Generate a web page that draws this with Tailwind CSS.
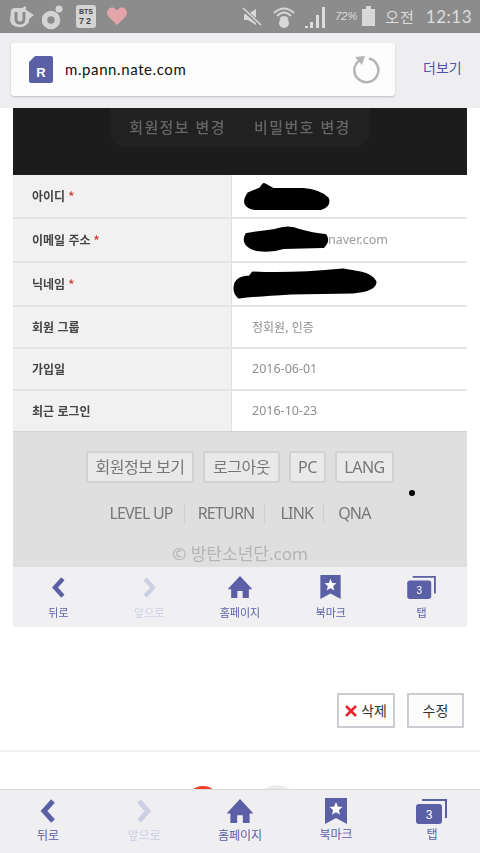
<!DOCTYPE html>
<html lang="ko">
<head>
<meta charset="UTF-8">
<meta name="viewport" content="width=device-width, initial-scale=1.0">
<title>m.pann.nate.com</title>
<script src="https://cdn.jsdelivr.net/npm/@tailwindcss/browser@4"></script>
</head>
<body class="w-[480px] h-[853px] overflow-hidden bg-white font-['Noto_Sans_CJK_KR','Noto_Sans',sans-serif]">

<!-- Status bar -->
<div class="h-[33px] bg-[#8c8c8c] flex items-center pl-[8px] pr-[8px] text-[#dcdcdc]">
  <svg class="w-[27px] h-[24px]" viewBox="0 0 27 24"><path d="M3 6 Q3 3 7 3 H14 L18 1 V5 L26 10 L21 14 V17 Q17 23 11 22 Q3 22 2 15Z" fill="#d4d4d4"/><path d="M8 7 V14 Q8 18 12 18 Q16 18 16 14 V7" fill="none" stroke="#8c8c8c" stroke-width="3"/></svg>
  <svg class="w-[21px] h-[26px] ml-[7px]" viewBox="0 0 21 26"><circle cx="9" cy="16" r="6.500" fill="none" stroke="#d4d4d4" stroke-width="5.500"/><circle cx="17" cy="5" r="3.500" fill="#d4d4d4"/></svg>
  <div class="w-[20px] h-[23px] ml-[13px] bg-[#d4d4d4] rounded-[3px] flex flex-col items-center justify-center text-[#444] font-['Liberation_Sans'] font-bold leading-none">
    <span class="text-[7px]">BTS</span>
    <span class="text-[9px] mt-[2px] tracking-[2px]">72</span>
  </div>
  <svg class="w-[22px] h-[19px] ml-[10px]" viewBox="0 0 22 20"><path d="M11 19 L2 10 C-2 5 3 -1 8 1 Q10 2 11 4 Q12 2 14 1 C19 -1 24 5 20 10Z" fill="#e3a5aa"/></svg>

  <svg class="w-[20px] h-[20px] ml-auto" viewBox="0 0 20 20"><path d="M2 7 H6 L14 2 V18 L6 13 H2Z" fill="#d8d8d8"/><path d="M0 1 L20 19" stroke="#8c8c8c" stroke-width="4"/><path d="M1 1 L19 18" stroke="#d8d8d8" stroke-width="1.500"/></svg>
  <svg class="w-[22px] h-[24px] ml-[11px]" viewBox="0 0 22 24"><g fill="none" stroke="#d8d8d8" stroke-width="2"><path d="M1 8 Q11 -1 21 8"/><path d="M4 11 Q11 4 18 11"/><path d="M7 14 Q11 10 15 14"/></g><circle cx="11" cy="18" r="5" fill="#d8d8d8"/></svg>
  <svg class="w-[22px] h-[23px] ml-[9px]" viewBox="0 0 22 23"><path d="M1 21 h3 v2 h-3z M6 17 h3 v6 h-3z M12 10 h3 v13 h-3z M18 2 h3 v21 h-3z" fill="#dcdcdc"/></svg>
  <span class="ml-[9px] text-[11px] italic leading-none font-['Liberation_Sans']">72%</span>
  <div class="ml-[5px] w-[13px] h-[17px] mt-[2px] bg-[#d8d8d8] relative"><div class="absolute -top-[3px] left-[4px] w-[5px] h-[3px] bg-[#d8d8d8]"></div></div>
  <span class="ml-[10px] text-[15px] leading-none tracking-[1px]">오전</span>
  <span class="ml-[11px] text-[17px] leading-none font-['Lato'] tracking-[0.5px]">12:13</span>
</div>

<!-- Address bar -->
<div class="h-[75px] bg-[#eeedf0] flex items-center pl-[11px]">
  <div class="w-[384px] h-[53px] bg-[#fdfdfd] rounded-[3px] shadow-[0_1px_2px_rgba(0,0,0,0.2)] flex items-center pl-[18px] pr-[15px] -mt-[3px]">
    <div class="relative w-[24px] h-[27px] bg-[#5a5fa6] rounded-[2px] flex items-end justify-center pb-[2px]">
      <div class="absolute top-0 left-0 border-t-[6px] border-r-[6px] border-t-[#fdfdfd] border-r-transparent"></div>
      <span class="text-white text-[13px] font-bold leading-[16px] font-['Liberation_Sans']">R</span>
    </div>
    <span class="ml-[12px] text-[15px] tracking-[0.6px] text-[#111] font-['Lato']">m.pann.nate.com</span>
    <svg class="w-[29px] h-[29px] ml-auto" viewBox="0 0 29 29"><path d="M9 5 A12 12 0 1 0 18 3.500" fill="none" stroke="#b5b5b5" stroke-width="2.500"/><path d="M4 2 L14 1 L11 10Z" fill="#b5b5b5"/></svg>
  </div>
  <span class="ml-[28px] text-[14px] text-[#4e55a8] -mt-[6px]">더보기</span>
</div>

<!-- Embedded screenshot -->
<div class="mx-[13px] w-[454px] relative">
  <div class="h-[67px] bg-[#1c1c1c] flex justify-center">
    <div class="w-[260px] h-[39px] rounded-b-[14px] bg-[#212121] flex items-center justify-center gap-[28px] text-[15px] tracking-[1.4px] font-medium text-[#666] blur-[0.5px]">
      <span>회원정보 변경</span>
      <span>비밀번호 변경</span>
    </div>
  </div>

  <div class="text-[12px] blur-[0.4px]">
    <div class="h-[44px] flex border-b-2 border-[#e4e4e4]">
      <div class="w-[219px] bg-[#f1f1f1] border-r border-[#e0e0e0] flex items-center pl-[19px] font-bold text-[#444]">아이디<span class="text-[#d0433f] ml-[3px]">*</span></div>
      <div class="flex-1 bg-white"></div>
    </div>
    <div class="h-[44px] flex border-b-2 border-[#e4e4e4]">
      <div class="w-[219px] bg-[#f1f1f1] border-r border-[#e0e0e0] flex items-center pl-[19px] font-bold text-[#444]">이메일 주소<span class="text-[#d0433f] ml-[3px]">*</span></div>
      <div class="flex-1 bg-white flex items-center pl-[96px] text-[12.5px] text-[#9a9a9a] font-['Noto_Sans']">naver.com</div>
    </div>
    <div class="h-[44px] flex border-b-2 border-[#e4e4e4]">
      <div class="w-[219px] bg-[#f1f1f1] border-r border-[#e0e0e0] flex items-center pl-[19px] font-bold text-[#444]">닉네임<span class="text-[#d0433f] ml-[3px]">*</span></div>
      <div class="flex-1 bg-white"></div>
    </div>
    <div class="h-[42px] flex border-b-2 border-[#e4e4e4]">
      <div class="w-[219px] bg-[#f1f1f1] border-r border-[#e0e0e0] flex items-center pl-[19px] font-bold text-[#444]">회원 그룹</div>
      <div class="flex-1 bg-white flex items-center pl-[20px] text-[#8e8e8e]">정회원, 인증</div>
    </div>
    <div class="h-[42px] flex border-b-2 border-[#e4e4e4]">
      <div class="w-[219px] bg-[#f1f1f1] border-r border-[#e0e0e0] flex items-center pl-[19px] font-bold text-[#444]">가입일</div>
      <div class="flex-1 bg-white flex items-center pl-[20px] text-[12.5px] text-[#8e8e8e] font-['Noto_Sans']">2016-06-01</div>
    </div>
    <div class="h-[40px] flex">
      <div class="w-[219px] bg-[#f1f1f1] border-r border-[#e0e0e0] flex items-center pl-[19px] font-bold text-[#444]">최근 로그인</div>
      <div class="flex-1 bg-white flex items-center pl-[20px] text-[12.5px] text-[#8e8e8e] font-['Noto_Sans']">2016-10-23</div>
    </div>
  </div>

  <!-- Site footer -->
  <div class="relative h-[136px] bg-[#dfdfdf] border-t border-[#d4d4d4] flex flex-col items-center text-[#777] blur-[0.4px]">
    <div class="flex gap-[9px] mt-[19px] text-[16px] tracking-[-0.5px] font-['Noto_Sans','Noto_Sans_CJK_KR']">
      <span class="w-[108px] h-[32px] flex items-center justify-center bg-[#e9e9e9] border-2 border-[#d2d2d2] rounded-[3px]">회원정보 보기</span>
      <span class="w-[77px] h-[32px] flex items-center justify-center bg-[#e9e9e9] border-2 border-[#d2d2d2] rounded-[3px]">로그아웃</span>
      <span class="w-[37px] h-[32px] flex items-center justify-center bg-[#e9e9e9] border-2 border-[#d2d2d2] rounded-[3px]">PC</span>
      <span class="w-[59px] h-[32px] flex items-center justify-center bg-[#e9e9e9] border-2 border-[#d2d2d2] rounded-[3px]">LANG</span>
    </div>
    <div class="flex items-center mt-[20px] text-[16px] leading-[20px] tracking-[-0.8px] font-['Noto_Sans']">
      <span class="pr-[11px] border-r border-[#cfcfcf]">LEVEL UP</span>
      <span class="pl-[13px] pr-[10px] border-r border-[#cfcfcf]">RETURN</span>
      <span class="pl-[15px] pr-[10px] border-r border-[#cfcfcf]">LINK</span>
      <span class="pl-[14px]">QNA</span>
    </div>
    <div class="mt-[21px] text-[17px] leading-[20px] text-[#b4b4b4] font-['Noto_Sans','Noto_Sans_CJK_KR']">© 방탄소년단.com</div>
    <div class="absolute left-[396px] top-[58px] w-[6px] h-[6px] rounded-full bg-black"></div>
  </div>

  <!-- Embedded nav -->
  <div class="h-[60px] bg-[#f0f0f2] grid grid-cols-5 text-[#5b62a8] text-[11px] leading-[14px] blur-[0.4px]">
    <div class="flex flex-col items-center pt-[10px]">
      <svg class="w-[15px] h-[21px]" viewBox="0 0 16 24"><path d="M13 2 L4 12 L13 22" fill="none" stroke="#5a5fa6" stroke-width="5"/></svg>
      <span class="mt-[7px]">뒤로</span>
    </div>
    <div class="flex flex-col items-center pt-[10px] text-[#cdd0e4]">
      <svg class="w-[15px] h-[21px]" viewBox="0 0 16 24"><path d="M3 2 L12 12 L3 22" fill="none" stroke="#cdd0e4" stroke-width="5"/></svg>
      <span class="mt-[7px]">앞으로</span>
    </div>
    <div class="flex flex-col items-center pt-[9px]">
      <svg class="w-[26px] h-[23px]" viewBox="0 0 28 26"><path d="M14 0 L28 15 H24 V25 H17 V17 H11 V25 H4 V15 H0Z" fill="#5a5fa6"/></svg>
      <span class="mt-[6px]">홈페이지</span>
    </div>
    <div class="flex flex-col items-center pt-[8px]">
      <svg class="w-[21px] h-[24px]" viewBox="0 0 22 26"><path d="M0 0 H22 V26 L11 20 L0 26Z" fill="#5a5fa6"/><path d="M11 4 L12.800 8.600 L17.500 8.900 L13.900 12 L15 16.700 L11 14.200 L7 16.700 L8.100 12 L4.500 8.900 L9.200 8.600Z" fill="#fff"/></svg>
      <span class="mt-[6px]">북마크</span>
    </div>
    <div class="flex flex-col items-center pt-[8px]">
      <svg class="w-[30px] h-[24px]" viewBox="0 0 32 26"><path d="M6 1 H31 V20 H29 V3 H6Z" fill="#5a5fa6"/><rect x="0" y="6" width="26" height="20" rx="3" fill="#5a5fa6"/><text x="13" y="20.500" text-anchor="middle" font-size="11" fill="#fff" font-family="Liberation Sans">3</text></svg>
      <span class="mt-[6px]">탭</span>
    </div>
  </div>

  <!-- Marker scribbles over the private values -->
  <svg class="absolute left-[218px] top-[72px] w-[150px] h-[125px]" viewBox="0 0 150 125">
    <path d="M18 14 Q26 11 30 9 L33 5 L42 10 H72 Q88 11 96 19 Q98 25 90 28 L24 28 Q10 26 18 14Z" fill="#000" stroke="#000" stroke-width="4" stroke-linejoin="round"/>
    <path d="M16 55 Q28 53 44 51 Q58 46 68 51 Q82 55 94 56 Q97 61 92 66 L52 67 Q40 71 26 69 Q11 65 16 55Z" fill="#000" stroke="#000" stroke-width="4" stroke-linejoin="round"/>
    <path d="M5 103 Q8 97 19 97 L22 93 Q60 95 112 90 L124 92 Q140 94 144 102 Q144 110 122 112 L60 113 Q25 115 8 117 Q2 112 5 103Z" fill="#000" stroke="#000" stroke-width="3" stroke-linejoin="round"/>
  </svg>
</div>

<!-- Page buttons -->
<div class="flex justify-end gap-[12px] pr-[16px] mt-[66px] text-[14px] text-[#333]">
  <div class="w-[58px] h-[35px] border-2 border-[#cbcdd2] bg-white flex items-center justify-center">
    <svg class="w-[12px] h-[12px] mr-[4px]" viewBox="0 0 12 12"><path d="M1 1 L11 11 M11 1 L1 11" stroke="#e8262a" stroke-width="2.500"/></svg>삭제
  </div>
  <div class="w-[57px] h-[35px] border-2 border-[#cbcdd2] bg-[#fcfcfc] flex items-center justify-center">수정</div>
</div>
<div class="mt-[22px] h-[2px] bg-[#f1f1f1]"></div>

<!-- Content cut off behind the browser nav -->
<div class="relative h-[37px] overflow-hidden bg-white">
  <div class="absolute left-[186px] top-[34px] w-[34px] h-[34px] rounded-full bg-[#f0402a]"></div>
  <div class="absolute left-[257px] top-[33px] w-[40px] h-[40px] rounded-full bg-[#ececec]"></div>
</div>

<!-- Browser nav -->
<div class="h-[64px] bg-[#efeff1] border-t border-[#d9d9db] grid grid-cols-5 text-[#5b62a8] text-[12px] leading-[16px]">
  <div class="flex flex-col items-center pt-[9px]">
    <svg class="w-[16px] h-[24px]" viewBox="0 0 16 24"><path d="M13 2 L4 12 L13 22" fill="none" stroke="#5a5fa6" stroke-width="5"/></svg>
    <span class="mt-[4px]">뒤로</span>
  </div>
  <div class="flex flex-col items-center pt-[9px] text-[#cdd0e4]">
    <svg class="w-[16px] h-[24px]" viewBox="0 0 16 24"><path d="M3 2 L12 12 L3 22" fill="none" stroke="#cdd0e4" stroke-width="5"/></svg>
    <span class="mt-[4px]">앞으로</span>
  </div>
  <div class="flex flex-col items-center pt-[9px]">
    <svg class="w-[28px] h-[25px]" viewBox="0 0 28 26"><path d="M14 0 L28 15 H24 V25 H17 V17 H11 V25 H4 V15 H0Z" fill="#5a5fa6"/></svg>
    <span class="mt-[3px]">홈페이지</span>
  </div>
  <div class="flex flex-col items-center pt-[8px]">
    <svg class="w-[22px] h-[26px]" viewBox="0 0 22 26"><path d="M0 0 H22 V26 L11 20 L0 26Z" fill="#5a5fa6"/><path d="M11 4 L12.800 8.600 L17.500 8.900 L13.900 12 L15 16.700 L11 14.200 L7 16.700 L8.100 12 L4.500 8.900 L9.200 8.600Z" fill="#fff"/></svg>
    <span class="mt-[2px]">북마크</span>
  </div>
  <div class="flex flex-col items-center pt-[8px]">
    <svg class="w-[32px] h-[26px]" viewBox="0 0 32 26"><path d="M6 1 H31 V20 H29 V3 H6Z" fill="#5a5fa6"/><rect x="0" y="6" width="26" height="20" rx="3" fill="#5a5fa6"/><text x="13" y="20.500" text-anchor="middle" font-size="12" fill="#fff" font-family="Liberation Sans">3</text></svg>
    <span class="mt-[2px]">탭</span>
  </div>
</div>

</body>
</html>
